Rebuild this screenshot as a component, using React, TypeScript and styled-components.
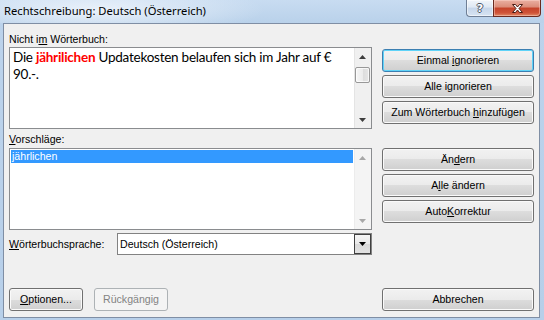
import React from "react";
import styled, { createGlobalStyle, css } from "styled-components";

const Global = createGlobalStyle`
  html, body { margin: 0; padding: 0; background: #ffffff; }
  body { width: 544px; height: 320px; overflow: hidden; }
`;

const UI = `"Liberation Sans", Arial, sans-serif`;

const Window = styled.div`
  width: 544px;
  height: 320px;
  box-sizing: border-box;
  display: flex;
  flex-direction: column;
  background: linear-gradient(180deg, #bcd3ec 0%, #b7cfe9 100%);
  font-family: ${UI};
  font-size: 10.6px;
  color: #000;
  overflow: hidden;
`;

const TitleBar = styled.div`
  height: 23px;
  flex: none;
  display: flex;
  align-items: flex-start;
  background:
    radial-gradient(ellipse 170px 26px at 95px 10px, rgba(236, 243, 251, 0.95), rgba(236, 243, 251, 0) 100%),
    linear-gradient(180deg, #c8dcf1 0%, #b9d1ea 100%);
`;

const Title = styled.div`
  font-family: "Noto Sans", "Liberation Sans", sans-serif;
  font-size: 11.2px;
  line-height: 14px;
  padding: 4px 0 0 4px;
  color: #000;
`;

const Caption = styled.div`
  margin-left: auto;
  margin-right: 3px;
  display: flex;
`;

const CapBtn = styled.div<{ $kind: "help" | "close" }>`
  height: 17px;
  box-sizing: border-box;
  display: flex;
  align-items: center;
  justify-content: center;
  border-style: solid;
  border-width: 0 1px 1px 1px;
  ${(p) =>
    p.$kind === "help"
      ? css`
          width: 27px;
          border-color: #6f7f95;
          border-right-width: 0;
          border-bottom-left-radius: 4px;
          background: linear-gradient(180deg, #f1f5fa 0%, #dfe8f3 45%, #c6d6ea 50%, #d7e4f2 100%);
          box-shadow: inset 0 0 0 1px rgba(255, 255, 255, 0.55);
        `
      : css`
          width: 48px;
          border-color: #6a2a20;
          border-bottom-right-radius: 4px;
          background: linear-gradient(180deg, #eab0a2 0%, #dc8e7b 42%, #c5442b 52%, #cf5338 80%, #e08a66 100%);
          box-shadow: inset 0 0 0 1px rgba(255, 220, 210, 0.45);
        `}
`;

const HelpGlyph = styled.span`
  font-family: "DejaVu Sans", sans-serif;
  font-weight: bold;
  font-size: 11px;
  line-height: 11px;
  color: #ffffff;
  text-shadow: 1px 0 0 #4a5566, -1px 0 0 #4a5566, 0 1px 0 #4a5566, 0 -1px 0 #4a5566;
`;

const Client = styled.div`
  flex: 1;
  min-height: 0;
  margin: 0 4px 2px 3px;
  border: 1px solid #7f8ea4;
  background: #f0f0f0;
  display: flex;
  flex-direction: column;
  padding: 9px 5px 6px 5px;
`;

const TopArea = styled.div`
  display: flex;
  gap: 10px;
`;

const LeftCol = styled.div`
  width: 363px;
  display: flex;
  flex-direction: column;
`;

const RightCol = styled.div`
  width: 152px;
  display: flex;
  flex-direction: column;
  padding-top: 16px;
`;

const ButtonGroup = styled.div<{ $gapTop?: number }>`
  display: flex;
  flex-direction: column;
  gap: 3px;
  margin-top: ${(p) => p.$gapTop ?? 0}px;
`;

const Label = styled.div<{ $top?: number }>`
  height: 13px;
  line-height: 13px;
  margin-top: ${(p) => p.$top ?? 0}px;
  white-space: nowrap;
`;

const Key = styled.u`
  text-decoration: underline;
  text-underline-offset: 1px;
`;

const Box = styled.div<{ $top: number }>`
  height: 82px;
  margin-top: ${(p) => p.$top}px;
  box-sizing: border-box;
  border: 1px solid #8a8c8f;
  background: #ffffff;
  display: flex;
`;

const EditText = styled.div`
  flex: 1;
  padding: 1px 3px;
  font-family: Lato, "Open Sans", sans-serif;
  font-size: 13.5px;
  letter-spacing: -0.25px;
  line-height: 17px;
  white-space: nowrap;
  overflow: hidden;
  color: #000;
`;

const Wrong = styled.span`
  color: #ff0000;
  font-weight: bold;
`;

const ListBody = styled.div`
  flex: 1;
  padding: 1px;
`;

const ListItem = styled.div<{ $selected?: boolean }>`
  height: 13px;
  line-height: 13px;
  padding-left: 1px;
  ${(p) =>
    p.$selected &&
    css`
      background: #3399ff;
      color: #ffffff;
    `}
`;

const ScrollBar = styled.div<{ $disabled?: boolean }>`
  width: 17px;
  flex: none;
  display: flex;
  flex-direction: column;
  background: ${(p) => (p.$disabled ? "#f4f4f4" : "#f0f0f0")};
  box-shadow: inset 1px 0 0 ${(p) => (p.$disabled ? "#ececec" : "#e4e4e4")};
`;

const Arrow = styled.div`
  height: 17px;
  flex: none;
  display: flex;
  align-items: center;
  justify-content: center;
`;

const Track = styled.div`
  flex: 1;
`;

const Thumb = styled.div`
  height: 16px;
  margin: 2px 1px 0 1px;
  box-sizing: border-box;
  border: 1px solid #989898;
  border-radius: 2px;
  background: linear-gradient(90deg, #f6f6f6 0%, #ececec 50%, #dcdcdc 50%, #e6e6e6 100%);
  box-shadow: inset 0 0 0 1px rgba(255, 255, 255, 0.7);
`;

const Tri = ({ dir, color }: { dir: "up" | "down"; color: string }) => (
  <svg width="7" height="4" viewBox="0 0 7 4">
    <path d={dir === "up" ? "M3.5 0 L7 4 L0 4 Z" : "M0 0 L7 0 L3.5 4 Z"} fill={color} />
  </svg>
);

const LangRow = styled.div`
  margin-top: 3px;
  height: 22px;
  display: flex;
  align-items: center;
`;

const Combo = styled.div`
  margin-left: auto;
  width: 255px;
  height: 22px;
  box-sizing: border-box;
  border: 1px solid #828282;
  background: #ffffff;
  display: flex;
`;

const ComboText = styled.div`
  flex: 1;
  line-height: 20px;
  padding-left: 2px;
  white-space: nowrap;
`;

const ComboBtn = styled.div`
  width: 17px;
  box-sizing: border-box;
  border: 1px solid #404040;
  background: linear-gradient(180deg, #f6f6f6 0%, #e8e8e8 50%, #d9d9d9 51%, #e2e2e2 100%);
  display: flex;
  align-items: center;
  justify-content: center;
`;

const Footer = styled.div`
  margin-top: auto;
  display: flex;
  gap: 11px;
`;

const Button = styled.div<{ $w?: number; $default?: boolean; $disabled?: boolean; $push?: boolean }>`
  width: ${(p) => p.$w ?? 152}px;
  height: 23px;
  box-sizing: border-box;
  border: 1px solid #707070;
  border-radius: 3px;
  background: linear-gradient(180deg, #f2f2f2 0%, #ebebeb 50%, #dddddd 50%, #cfcfcf 100%);
  box-shadow: inset 0 0 0 1px #fafafa;
  display: flex;
  align-items: center;
  justify-content: center;
  white-space: nowrap;
  line-height: 13px;
  padding-bottom: 1px;
  ${(p) => p.$push && css`margin-left: auto;`}
  ${(p) =>
    p.$default &&
    css`
      border-color: #3c7fb1;
      box-shadow: inset 0 0 0 1px #5fd3f8;
    `}
  ${(p) =>
    p.$disabled &&
    css`
      border-color: #adb2b5;
      background: #f4f4f4;
      box-shadow: none;
      color: #838383;
    `}
`;

const BtnLabel = styled.span`
  white-space: pre;
`;

export default function App() {
  return (
    <>
      <Global />
      <Window>
        <TitleBar>
          <Title>Rechtschreibung: Deutsch (Österreich)</Title>
          <Caption>
            <CapBtn $kind="help">
              <HelpGlyph>?</HelpGlyph>
            </CapBtn>
            <CapBtn $kind="close">
              <svg width="11" height="9" viewBox="0 0 11 9">
                <path
                  d="M0.5 0.5 H3.5 L5.5 3 L7.5 0.5 H10.5 L7 4.5 L10.5 8.5 H7.5 L5.5 6 L3.5 8.5 H0.5 L4 4.5 Z"
                  fill="#ffffff"
                  stroke="#4a1a12"
                  strokeWidth="1"
                  strokeLinejoin="round"
                />
              </svg>
            </CapBtn>
          </Caption>
        </TitleBar>
        <Client>
          <TopArea>
            <LeftCol>
              <Label>
                Nicht i<Key>m</Key> Wörterbuch:
              </Label>
              <Box $top={1}>
                <EditText>
                  Die <Wrong>jährilichen</Wrong> Updatekosten belaufen sich im Jahr auf €
                  <br />
                  90.-.
                </EditText>
                <ScrollBar>
                  <Arrow>
                    <Tri dir="up" color="#3d3d3d" />
                  </Arrow>
                  <Thumb />
                  <Track />
                  <Arrow>
                    <Tri dir="down" color="#3d3d3d" />
                  </Arrow>
                </ScrollBar>
              </Box>
              <Label $top={4}>
                <Key>V</Key>orschläge:
              </Label>
              <Box $top={2}>
                <ListBody>
                  <ListItem $selected>jährlichen</ListItem>
                </ListBody>
                <ScrollBar $disabled>
                  <Arrow>
                    <Tri dir="up" color="#a8a8a8" />
                  </Arrow>
                  <Track />
                  <Arrow>
                    <Tri dir="down" color="#a8a8a8" />
                  </Arrow>
                </ScrollBar>
              </Box>
              <LangRow>
                <Label>
                  <Key>W</Key>örterbuchsprache:
                </Label>
                <Combo>
                  <ComboText>Deutsch (Österreich)</ComboText>
                  <ComboBtn>
                    <Tri dir="down" color="#000000" />
                  </ComboBtn>
                </Combo>
              </LangRow>
            </LeftCol>
            <RightCol>
              <ButtonGroup>
                <Button $default>
                  <BtnLabel>
                    Einmal <Key>i</Key>gnorieren
                  </BtnLabel>
                </Button>
                <Button>
                  <BtnLabel>
                    Alle i<Key>g</Key>norieren
                  </BtnLabel>
                </Button>
                <Button>
                  <BtnLabel>
                    Zum Wörterbuch <Key>h</Key>inzufügen
                  </BtnLabel>
                </Button>
              </ButtonGroup>
              <ButtonGroup $gapTop={24}>
                <Button>
                  <BtnLabel>
                    Än<Key>d</Key>ern
                  </BtnLabel>
                </Button>
                <Button>
                  <BtnLabel>
                    A<Key>l</Key>le ändern
                  </BtnLabel>
                </Button>
                <Button>
                  <BtnLabel>
                    Auto<Key>K</Key>orrektur
                  </BtnLabel>
                </Button>
              </ButtonGroup>
            </RightCol>
          </TopArea>
          <Footer>
            <Button $w={74}>
              <BtnLabel>
                <Key>O</Key>ptionen...
              </BtnLabel>
            </Button>
            <Button $w={74} $disabled>
              <BtnLabel>Rückgängig</BtnLabel>
            </Button>
            <Button $push>
              <BtnLabel>Abbrechen</BtnLabel>
            </Button>
          </Footer>
        </Client>
      </Window>
    </>
  );
}
